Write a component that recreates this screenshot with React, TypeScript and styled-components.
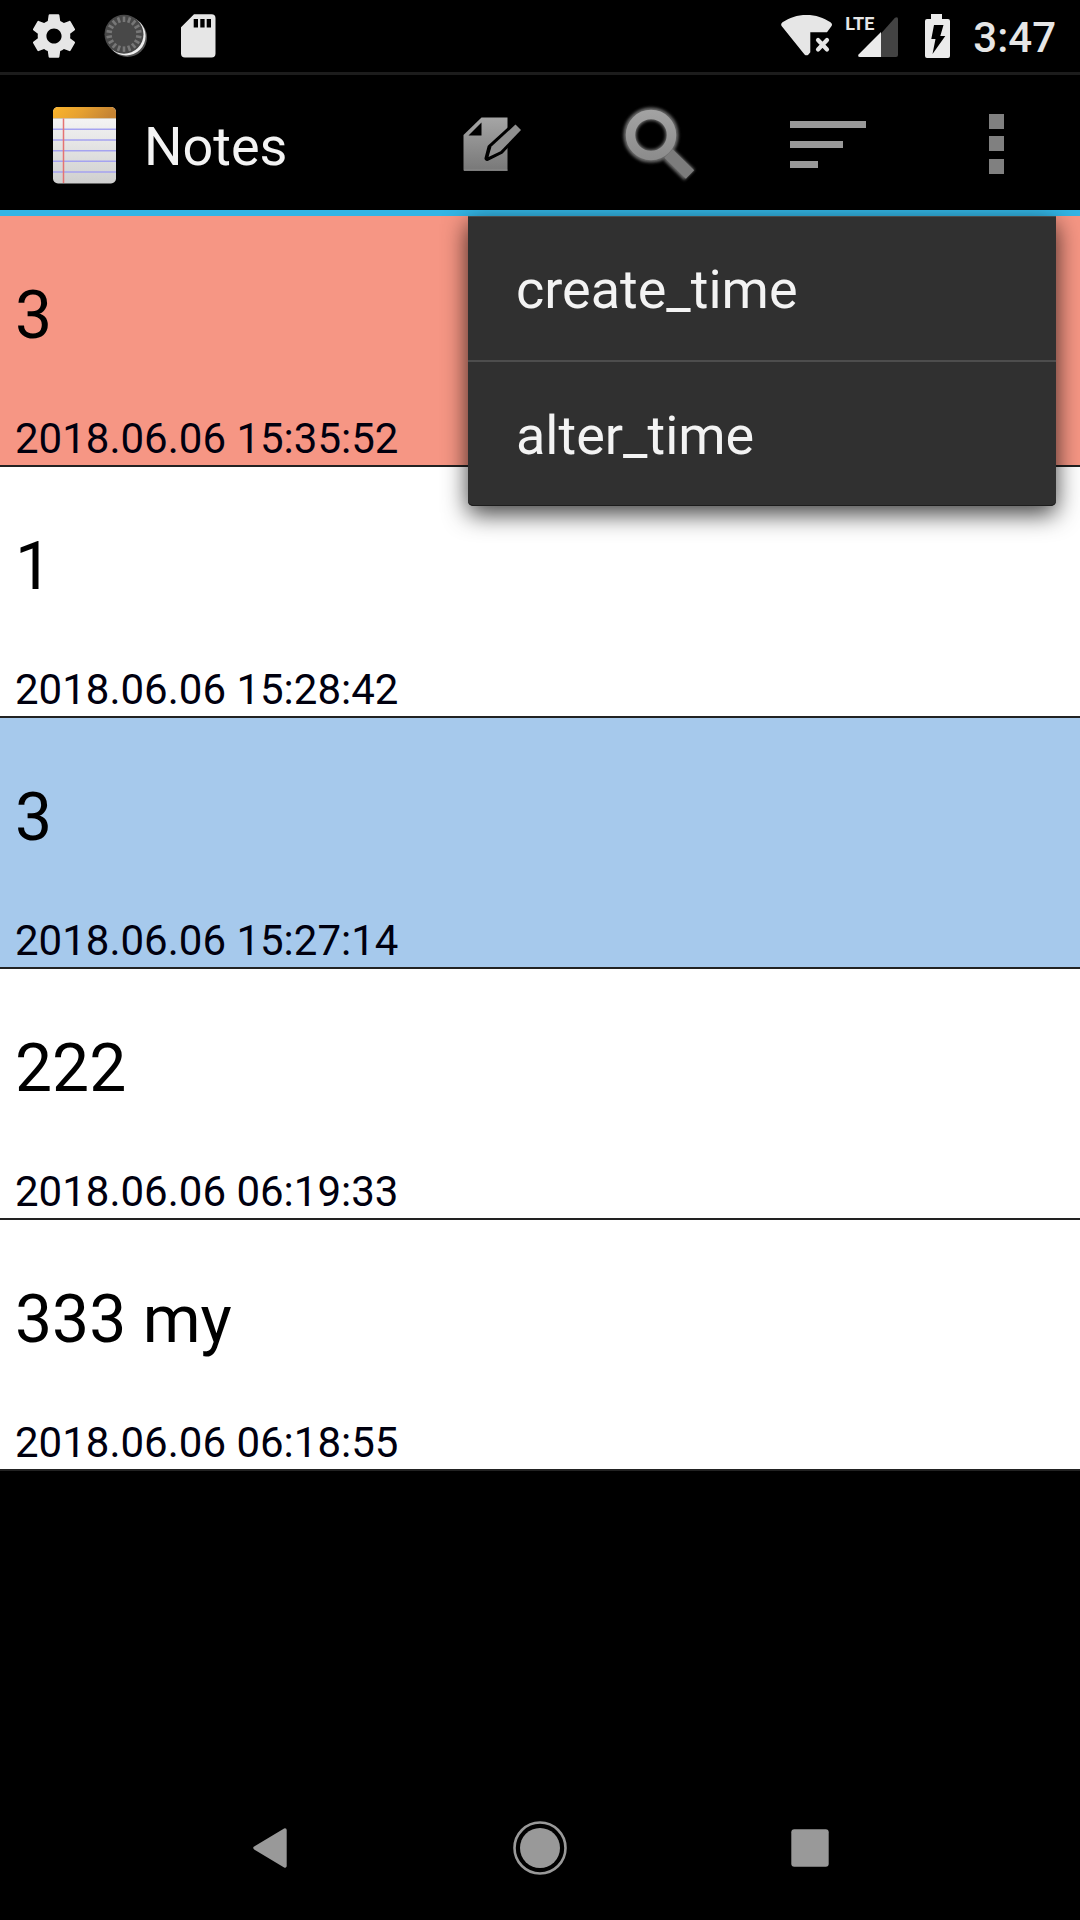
import React from "react";
import styled, { createGlobalStyle } from "styled-components";

const GlobalStyle = createGlobalStyle`
  *, *::before, *::after { box-sizing: border-box; }
  html, body { margin: 0; background: #000; }
  body { font-family: Roboto, "Noto Sans", sans-serif; }
`;

const Screen = styled.div`
  min-height: 100vh;
  display: flex;
  flex-direction: column;
  background: #000;
`;

const StatusBar = styled.header`
  height: 75px;
  display: flex;
  justify-content: space-between;
  border-bottom: 3px solid #1c1c1c;
  padding: 0 24px 0 18px;
`;

const StatusGroup = styled.div`
  display: flex;
  align-items: center;
`;

const StatusIcon = styled.svg<{ $width: number }>`
  display: block;
  width: ${(p) => p.$width}px;
  height: 72px;
`;

const NetworkBadge = styled.div`
  position: relative;
`;

const NetworkLabel = styled.span`
  position: absolute;
  top: 14px;
  left: 4px;
  color: #e6e6e6;
  font-size: 18px;
  font-weight: 700;
  line-height: 20px;
`;

const Clock = styled.time`
  margin-left: 12px;
  padding-top: 4px;
  color: #e6e6e6;
  font-size: 42px;
  font-weight: 500;
  line-height: 48px;
`;

const AppBar = styled.nav`
  height: 141px;
  display: flex;
  align-items: center;
  justify-content: space-between;
  border-bottom: 6px solid #33b5e5;
`;

const Brand = styled.div`
  display: flex;
  align-items: center;
  gap: 24px;
  padding: 4px 0 0 48px;
`;

const Title = styled.h1`
  margin: 0;
  padding-top: 4px;
  color: #f3f3f3;
  font-size: 54px;
  font-weight: 400;
  line-height: 64px;
`;

const Actions = styled.div`
  display: flex;
  padding-top: 2px;
`;

const IconButton = styled.button<{ $width: string }>`
  width: ${(p) => p.$width};
  height: 132px;
  display: flex;
  align-items: center;
  justify-content: center;
  padding: 0;
  border: 0;
  background: none;
  cursor: pointer;
`;

const Main = styled.main`
  position: relative;
  flex: 1;
`;

const NoteList = styled.ul`
  margin: 0;
  padding: 0;
  list-style: none;
`;

const NoteRow = styled.li<{ $color: string }>`
  padding: 0 15px 2px;
  border-bottom: 2px solid #222;
  background: ${(p) => p.$color};
`;

const NoteTitle = styled.h2`
  margin: 0;
  padding: 61px 0 59px;
  color: #000;
  font-size: 66px;
  font-weight: 400;
  line-height: 78px;
`;

const NoteDate = styled.time`
  display: block;
  color: #00000f;
  font-size: 42px;
  line-height: 49px;
`;

const SortMenu = styled.div`
  position: absolute;
  top: 0;
  right: 24px;
  width: min(588px, 90%);
  border-radius: 0 0 5px 5px;
  background: #303030;
  box-shadow: 0 8px 24px rgba(0, 0, 0, 0.76), inset 0 1px #4a4a4a, inset 0 -1px #1c1c1c;
`;

const MenuItem = styled.button`
  display: block;
  width: 100%;
  padding: 42px 48px 38px;
  border: 0;
  background: none;
  color: #f3f3f3;
  font: 400 54px/64px Roboto, "Noto Sans", sans-serif;
  text-align: left;
  cursor: pointer;

  & + & {
    border-top: 2px solid #4d4d4d;
  }
`;

const NavBar = styled.footer`
  height: 144px;
  display: flex;
  align-items: center;
  justify-content: center;
`;

const notes = [
  { title: "3", date: "2018.06.06 15:35:52", color: "#f69684" },
  { title: "1", date: "2018.06.06 15:28:42", color: "#fff" },
  { title: "3", date: "2018.06.06 15:27:14", color: "#a6c9ec" },
  { title: "222", date: "2018.06.06 06:19:33", color: "#fff" },
  { title: "333 my", date: "2018.06.06 06:18:55", color: "#fff" },
];

const ticks = Array.from({ length: 18 }, (_, i) => i * 20);

function GearIcon() {
  return (
    <StatusIcon $width={72} viewBox="-4.6 -4.6 33.2 33.2" fill="#e6e6e6">
      <path d="M19.43 12.98c.04-.32.07-.64.07-.98s-.03-.66-.07-.98l2.11-1.65c.19-.15.24-.42.12-.64l-2-3.46c-.12-.22-.39-.3-.61-.22l-2.49 1c-.52-.4-1.08-.73-1.69-.98l-.38-2.65C14.46 2.18 14.25 2 14 2h-4c-.25 0-.46.18-.49.42l-.38 2.65c-.61.25-1.17.59-1.69.98l-2.49-1c-.23-.09-.49 0-.61.22l-2 3.46c-.13.22-.07.49.12.64l2.11 1.65c-.04.32-.07.65-.07.98s.03.66.07.98l-2.11 1.65c-.19.15-.24.42-.12.64l2 3.46c.12.22.39.3.61.22l2.49-1c.52.4 1.08.73 1.69.98l.38 2.65c.03.24.24.42.49.42h4c.25 0 .46-.18.49-.42l.38-2.65c.61-.25 1.17-.59 1.69-.98l2.49 1c.23.09.49 0 .61-.22l2-3.46c.12-.22.07-.49-.12-.64l-2.11-1.65zM12 15.5c-1.93 0-3.5-1.57-3.5-3.5s1.57-3.5 3.5-3.5 3.5 1.57 3.5 3.5-1.57 3.5-3.5 3.5z" />
    </StatusIcon>
  );
}

function SpinnerIcon() {
  return (
    <StatusIcon $width={72} viewBox="0 0 72 72">
      <circle cx="37.4" cy="37.4" r="19.6" fill="#555" />
      <circle cx="36" cy="36" r="19.6" fill="#eee" />
      <circle cx="34" cy="34.2" r="19.5" fill="#484848" />
      {ticks.map((a) => (
        <path key={a} d="M34 16.5v5.5" stroke="#777" strokeWidth="2.6" transform={`rotate(${a} 34 34.2)`} />
      ))}
    </StatusIcon>
  );
}

function SdCardIcon() {
  return (
    <StatusIcon $width={72} viewBox="0 0 72 72">
      <path d="M32 14.3h17.5a4 4 0 0 1 4 4v35.2a4 4 0 0 1-4 4H23a4 4 0 0 1-4-4V27.3z" fill="#e6e6e6" />
      <path d="M31.7 19h4.3v8.6h-4.3zM38.3 19h4.3v8.6h-4.3zM44.7 19h4.3v8.6h-4.3z" fill="#000" />
    </StatusIcon>
  );
}

function WifiIcon() {
  return (
    <StatusIcon $width={64} viewBox="0 0 64 72">
      <path
        d="M29.5 15C39 15 46.5 17.6 53.5 22.3Q56 24.2 54.4 26.3L50 32.3H33.3V52.3L31.5 54.4Q29.500 56.3 27.5 54.4L4.8 26.3Q3.2 24.2 5.5 22.3C12.5 17.6 20 15 29.5 15z"
        fill="#e6e6e6"
      />
      <path d="M41 40l9 9.5M50 40l-9 9.5" stroke="#e6e6e6" strokeWidth="4.2" strokeLinecap="round" />
    </StatusIcon>
  );
}

function SignalIcon() {
  return (
    <StatusIcon $width={72} viewBox="0 0 72 72">
      <path d="M40 33.5L54 17.8Q57 16 57 19V55Q57 57 55 57H40z" fill="#434343" />
      <path d="M40 32V57H19Q16 57 17.8 54.3z" fill="#ebebeb" />
    </StatusIcon>
  );
}

function BatteryIcon() {
  return (
    <StatusIcon $width={48} viewBox="1 0 48 72">
      <path d="M19 14h11v5h6a2 2 0 0 1 2 2v35a2 2 0 0 1-2 2H15a2 2 0 0 1-2-2V21a2 2 0 0 1 2-2h4z" fill="#ebebeb" />
      <path d="M22 25h9.5l-3.2 11h5L20.5 54l3-15h-4.2z" fill="#000" />
    </StatusIcon>
  );
}

function NotepadIcon() {
  return (
    <svg width="72" height="84" viewBox="0 0 72 84" aria-hidden="true">
      <defs>
        <linearGradient id="paper" x1="0" y1="0" x2="0" y2="1">
          <stop offset="0" stopColor="#fafafa" />
          <stop offset="1" stopColor="#cfcfcf" />
        </linearGradient>
        <linearGradient id="binding" x1="0" y1="0" x2="1" y2="0.15">
          <stop offset="0" stopColor="#fbb52b" />
          <stop offset="0.5" stopColor="#e6a131" />
          <stop offset="1" stopColor="#c58433" />
        </linearGradient>
      </defs>
      <rect x="5" y="4" width="63" height="76.5" rx="5" fill="url(#paper)" />
      <path d="M5 15V9a5 5 0 0 1 5-5h53a5 5 0 0 1 5 5v6z" fill="url(#binding)" />
      <path d="M5 15.5H68" stroke="#d5c6ae" strokeWidth="1" />
      <path d="M5 26.3H68M5 37H68M5 47.7H68M5 58.3H68M5 69H68" stroke="#a5a3f0" strokeWidth="1.4" />
      <path d="M15.5 15.5V80" stroke="#e57373" strokeWidth="1.5" />
    </svg>
  );
}

function ComposeIcon() {
  return (
    <svg width="72" height="72" viewBox="0 0 72 72" aria-hidden="true">
      <defs>
        <linearGradient id="sheet" x1="0" y1="9" x2="0" y2="63" gradientUnits="userSpaceOnUse">
          <stop offset="0" stopColor="#a6a6a6" />
          <stop offset="1" stopColor="#787878" />
        </linearGradient>
      </defs>
      <path d="M25.5 9.5H51.5V62.5H7.5V27z" fill="url(#sheet)" />
      <path d="M8 62.2H51.5" stroke="#999" strokeWidth="1" />
      <path d="M25.5 14.5V27.5H12.5z" fill="#000" />
      <path d="M59.5 16L65 22 45 43.5 31 50.5 34 39z" fill="#000" stroke="#000" strokeWidth="5" strokeLinejoin="round" />
      <path d="M59.5 16.5L65 22 44.5 43.2 32.5 49 35.5 38.5z" fill="#8f8f8f" />
    </svg>
  );
}

function SearchIcon() {
  return (
    <svg width="84" height="84" viewBox="0 0 84 84" aria-hidden="true">
      <defs>
        <linearGradient id="lens" x1="0" y1="8" x2="0" y2="78" gradientUnits="userSpaceOnUse">
          <stop offset="0" stopColor="#a3a3a3" />
          <stop offset="1" stopColor="#828282" />
        </linearGradient>
        <filter id="glow" x="-20%" y="-20%" width="140%" height="140%">
          <feGaussianBlur stdDeviation="1.8" />
        </filter>
      </defs>
      <g filter="url(#glow)" stroke="#6c6c6c" fill="none">
        <circle cx="33" cy="33" r="21" strokeWidth="13" />
        <path d="M51 53L71.5 73" strokeWidth="15" />
      </g>
      <path d="M50.5 51.5L72 72.5" stroke="#7c7c7c" strokeWidth="12" />
      <circle cx="33" cy="33" r="20.5" stroke="url(#lens)" strokeWidth="9.5" fill="none" />
    </svg>
  );
}

function SortIcon() {
  return (
    <svg width="78" height="50" viewBox="0 0 78 50" aria-hidden="true">
      <path d="M1 2h76v7H1zM1 22h53v7H1zM1 42h28v7H1z" fill="#999" />
    </svg>
  );
}

function OverflowIcon() {
  return (
    <svg width="15" height="60" viewBox="0 0 15 60" aria-hidden="true">
      <path d="M0 0h15v15H0zM0 22h15v15H0zM0 45h15v15H0z" fill="#808080" />
    </svg>
  );
}

export default function App() {
  return (
    <Screen>
      <GlobalStyle />
      <StatusBar>
        <StatusGroup>
          <GearIcon />
          <SpinnerIcon />
          <SdCardIcon />
        </StatusGroup>
        <StatusGroup>
          <WifiIcon />
          <NetworkBadge>
            <SignalIcon />
            <NetworkLabel>LTE</NetworkLabel>
          </NetworkBadge>
          <BatteryIcon />
          <Clock>3:47</Clock>
        </StatusGroup>
      </StatusBar>

      <AppBar>
        <Brand>
          <NotepadIcon />
          <Title>Notes</Title>
        </Brand>
        <Actions>
          <IconButton $width="168px" aria-label="New note"><ComposeIcon /></IconButton>
          <IconButton $width="168px" aria-label="Search"><SearchIcon /></IconButton>
          <IconButton $width="168px" aria-label="Sort"><SortIcon /></IconButton>
          <IconButton $width="168px" aria-label="More options"><OverflowIcon /></IconButton>
        </Actions>
      </AppBar>

      <Main>
        <NoteList>
          {notes.map((note) => (
            <NoteRow key={note.date} $color={note.color}>
              <NoteTitle>{note.title}</NoteTitle>
              <NoteDate>{note.date}</NoteDate>
            </NoteRow>
          ))}
        </NoteList>
        <SortMenu role="menu">
          <MenuItem role="menuitem">create_time</MenuItem>
          <MenuItem role="menuitem">alter_time</MenuItem>
        </SortMenu>
      </Main>

      <NavBar>
        <IconButton $width="25%" aria-label="Back">
          <svg width="54" height="54" viewBox="0 0 54 54" aria-hidden="true">
            <path d="M42 9L12 27 42 45z" fill="#999" stroke="#999" strokeWidth="3.4" strokeLinejoin="round" />
          </svg>
        </IconButton>
        <IconButton $width="25%" aria-label="Home">
          <svg width="54" height="54" viewBox="0 0 54 54" aria-hidden="true">
            <circle cx="27" cy="27" r="25.5" fill="none" stroke="#999" strokeWidth="2.6" />
            <circle cx="27" cy="27" r="20" fill="#999" />
          </svg>
        </IconButton>
        <IconButton $width="25%" aria-label="Recent apps">
          <svg width="54" height="54" viewBox="0 0 54 54" aria-hidden="true">
            <rect x="8.3" y="8.3" width="37.4" height="37.4" rx="3" fill="#999" />
          </svg>
        </IconButton>
      </NavBar>
    </Screen>
  );
}
